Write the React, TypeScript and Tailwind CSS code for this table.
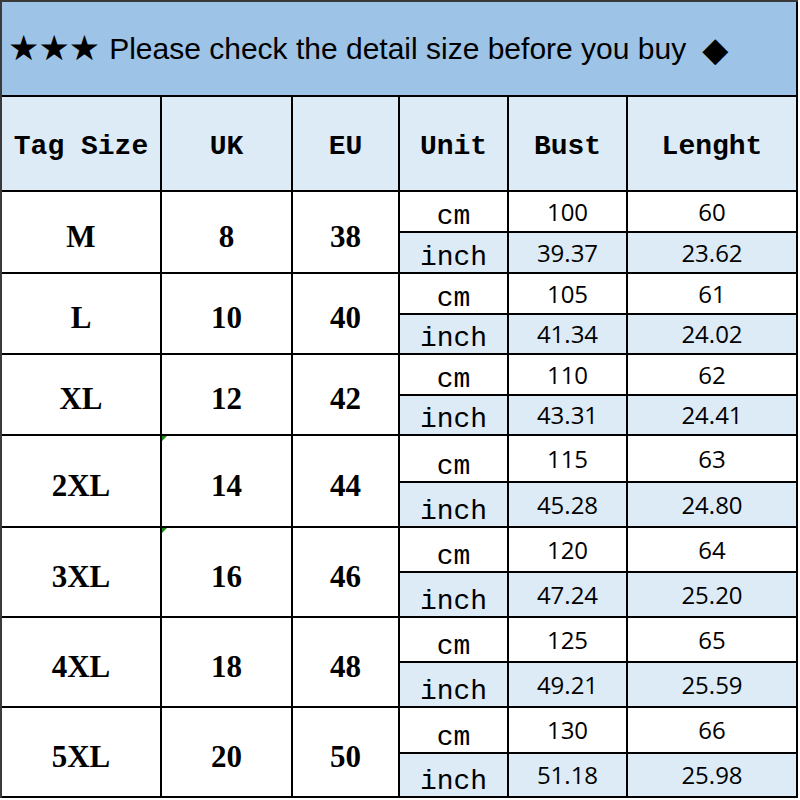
const sizes = [
  { tag: "M", uk: "8", eu: "38", cm: ["100", "60"], inch: ["39.37", "23.62"], mark: false },
  { tag: "L", uk: "10", eu: "40", cm: ["105", "61"], inch: ["41.34", "24.02"], mark: false },
  { tag: "XL", uk: "12", eu: "42", cm: ["110", "62"], inch: ["43.31", "24.41"], mark: false },
  { tag: "2XL", uk: "14", eu: "44", cm: ["115", "63"], inch: ["45.28", "24.80"], mark: true },
  { tag: "3XL", uk: "16", eu: "46", cm: ["120", "64"], inch: ["47.24", "25.20"], mark: true },
  { tag: "4XL", uk: "18", eu: "48", cm: ["125", "65"], inch: ["49.21", "25.59"], mark: false },
  { tag: "5XL", uk: "20", eu: "50", cm: ["130", "66"], inch: ["51.18", "25.98"], mark: false },
];

const headers = ["Tag Size", "UK", "EU", "Unit", "Bust", "Lenght"];

const mono = "font-['Liberation_Mono',monospace]";
const serif = "font-['Liberation_Serif',serif]";
const sans = "font-['Open_Sans',sans-serif]";

export default function App() {
  return (
    <div className="w-[800px] h-[800px] bg-white">
      <div className="w-[798px] h-[798px] border-l-2 border-t-2 border-[#3a3a3a]">
        <div className="grid grid-cols-[158px_129px_105px_107px_117px_168px] grid-rows-[93px_93px_39px_39px_39px_38px_39px_38px_45px_43px_43px_43px_43px_43px_44px_42px] gap-[2px] bg-black pr-[2px] pb-[2px] text-black">
          <div className="col-span-6 bg-[#9dc3e6] flex items-center pl-[6px] font-['Liberation_Sans',sans-serif] text-[30px]">
            <span className="font-['DejaVu_Sans',sans-serif] text-[35px] tracking-[-1px] mr-[10px]">★★★</span>
            <span>Please check the detail size before you buy</span>
            <span className="font-['DejaVu_Sans',sans-serif] text-[34px] leading-none ml-[16px]">◆</span>
          </div>

          {headers.map((h) => (
            <div
              key={h}
              className={`bg-[#ddebf7] flex items-center justify-center pt-[6px] ${mono} font-bold text-[28px] whitespace-pre`}
            >
              {h}
            </div>
          ))}

          {sizes.map((s) => [
            <div key={s.tag + "t"} className={`row-span-2 bg-white flex items-center justify-center pt-[10px] ${serif} font-bold text-[31px]`}>
              {s.tag}
            </div>,
            <div key={s.tag + "u"} className={`relative row-span-2 bg-white flex items-center justify-center pt-[10px] ${serif} font-bold text-[31px]`}>
              {s.mark && (
                <span className="absolute left-0 top-0 w-0 h-0 border-t-[5px] border-t-[#1a8a1a] border-r-[5px] border-r-transparent" />
              )}
              {s.uk}
            </div>,
            <div key={s.tag + "e"} className={`row-span-2 bg-white flex items-center justify-center pt-[10px] ${serif} font-bold text-[31px]`}>
              {s.eu}
            </div>,
            <div key={s.tag + "c"} className={`bg-white flex items-end justify-center leading-none ${mono} text-[28px]`}>
              cm
            </div>,
            <div key={s.tag + "cb"} className={`bg-white flex items-center justify-center ${sans} text-[24px]`}>
              {s.cm[0]}
            </div>,
            <div key={s.tag + "cl"} className={`bg-white flex items-center justify-center ${sans} text-[24px]`}>
              {s.cm[1]}
            </div>,
            <div key={s.tag + "i"} className={`bg-[#ddebf7] flex items-end justify-center leading-none ${mono} text-[28px]`}>
              inch
            </div>,
            <div key={s.tag + "ib"} className={`bg-[#ddebf7] flex items-center justify-center ${sans} text-[24px]`}>
              {s.inch[0]}
            </div>,
            <div key={s.tag + "il"} className={`bg-[#ddebf7] flex items-center justify-center ${sans} text-[24px]`}>
              {s.inch[1]}
            </div>,
          ])}
        </div>
      </div>
    </div>
  );
}
